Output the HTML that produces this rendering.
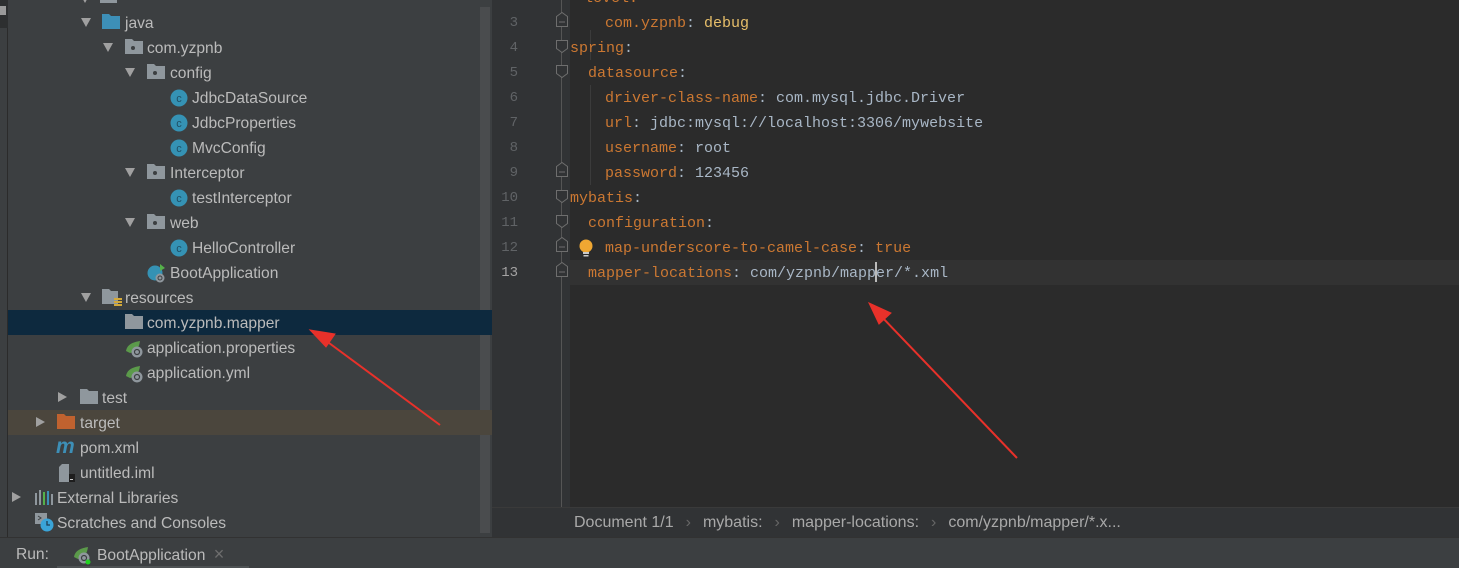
<!DOCTYPE html>
<html><head><meta charset="utf-8">
<style>
*{margin:0;padding:0;box-sizing:border-box}
body{width:1459px;height:568px;overflow:hidden;background:#2b2b2b;position:relative;font-family:"Liberation Sans",sans-serif}
.a{position:absolute}
.t{position:absolute;color:#bbbbbb;font-size:15.6px;line-height:25px;white-space:nowrap;margin-top:2px}
.c{position:absolute;font-family:"Liberation Mono",monospace;font-size:15px;line-height:25px;white-space:pre;color:#a9b7c6;margin-top:2px}
.k{color:#cc7832}
.ln{position:absolute;font-family:"Liberation Mono",monospace;font-size:14px;line-height:25px;color:#606366;width:30px;text-align:right;left:488px;margin-top:2px}
.arr{position:absolute;width:0;height:0;border-left:5px solid transparent;border-right:5px solid transparent;border-top:9px solid #a0a0a0}
.arr.r{border-top:5px solid transparent;border-bottom:5px solid transparent;border-left:9px solid #a0a0a0;border-right:0}
</style></head><body>
<div class="a" style="left:0;top:0;width:8px;height:537px;background:#3c3f41;border-right:1px solid #2b2b2b"></div>
<div class="a" style="left:0;top:0;width:8px;height:28px;background:#2d2f30"></div>
<div class="a" style="left:0;top:6px;width:6px;height:9px;background:#9a9a9a"></div>
<div class="a" style="left:8px;top:0;width:484px;height:537px;background:#3c3f41"></div>
<div class="a" style="left:480px;top:7px;width:10px;height:526px;background:#4a4c4e"></div>
<div class="a" style="left:8px;top:310px;width:484px;height:25px;background:#0d293e"></div>
<div class="a" style="left:8px;top:410px;width:484px;height:25px;background:#4b463d"></div>

<div class="a" style="left:80px;top:-15px;width:60px;height:20px">
 <span class="a" style="left:0;top:9px;border-left:5px solid transparent;border-right:5px solid transparent;border-top:9px solid #a0a0a0"></span>
 <span class="a" style="left:20px;top:10px;width:17px;height:8px;background:#8f979d"></span></div>

<div class="arr" style="left:81px;top:18px"></div>
<svg class="a" style="left:102px;top:14px" width="18" height="15"><path d="M0 0h7l2 2h9v13H0z" fill="#3d8fb7"/></svg>
<div class="t" style="left:125px;top:9px">java</div>

<div class="arr" style="left:103px;top:43px"></div>
<svg class="a" style="left:125px;top:39px" width="18" height="15"><path d="M0 0h7l2 2h9v13H0z" fill="#8f979d"/><circle cx="8" cy="9" r="2" fill="#3c3f41"/></svg>
<div class="t" style="left:147px;top:34px">com.yzpnb</div>

<div class="arr" style="left:125px;top:68px"></div>
<svg class="a" style="left:147px;top:64px" width="18" height="15"><path d="M0 0h7l2 2h9v13H0z" fill="#8f979d"/><circle cx="8" cy="9" r="2" fill="#3c3f41"/></svg>
<div class="t" style="left:170px;top:59px">config</div>

<svg class="a" style="left:170px;top:89px" width="18" height="18"><circle cx="9" cy="9" r="8.5" fill="#3592b4"/><text x="9" y="13" font-size="11" text-anchor="middle" fill="#1f4f63" font-family="Liberation Sans">c</text></svg>
<div class="t" style="left:192px;top:84px">JdbcDataSource</div>
<svg class="a" style="left:170px;top:114px" width="18" height="18"><circle cx="9" cy="9" r="8.5" fill="#3592b4"/><text x="9" y="13" font-size="11" text-anchor="middle" fill="#1f4f63" font-family="Liberation Sans">c</text></svg>
<div class="t" style="left:192px;top:109px">JdbcProperties</div>
<svg class="a" style="left:170px;top:139px" width="18" height="18"><circle cx="9" cy="9" r="8.5" fill="#3592b4"/><text x="9" y="13" font-size="11" text-anchor="middle" fill="#1f4f63" font-family="Liberation Sans">c</text></svg>
<div class="t" style="left:192px;top:134px">MvcConfig</div>

<div class="arr" style="left:125px;top:168px"></div>
<svg class="a" style="left:147px;top:164px" width="18" height="15"><path d="M0 0h7l2 2h9v13H0z" fill="#8f979d"/><circle cx="8" cy="9" r="2" fill="#3c3f41"/></svg>
<div class="t" style="left:170px;top:159px">Interceptor</div>
<svg class="a" style="left:170px;top:189px" width="18" height="18"><circle cx="9" cy="9" r="8.5" fill="#3592b4"/><text x="9" y="13" font-size="11" text-anchor="middle" fill="#1f4f63" font-family="Liberation Sans">c</text></svg>
<div class="t" style="left:192px;top:184px">testInterceptor</div>

<div class="arr" style="left:125px;top:218px"></div>
<svg class="a" style="left:147px;top:214px" width="18" height="15"><path d="M0 0h7l2 2h9v13H0z" fill="#8f979d"/><circle cx="8" cy="9" r="2" fill="#3c3f41"/></svg>
<div class="t" style="left:170px;top:209px">web</div>
<svg class="a" style="left:170px;top:239px" width="18" height="18"><circle cx="9" cy="9" r="8.5" fill="#3592b4"/><text x="9" y="13" font-size="11" text-anchor="middle" fill="#1f4f63" font-family="Liberation Sans">c</text></svg>
<div class="t" style="left:192px;top:234px">HelloController</div>

<svg class="a" style="left:147px;top:263px" width="20" height="20"><circle cx="8" cy="10" r="7.5" fill="#3592b4"/><path d="M13 1l5 4-5 3z" fill="#55b04a"/><circle cx="13" cy="15" r="4.5" fill="#8f979d"/><circle cx="13" cy="15" r="2" fill="none" stroke="#3c3f41" stroke-width="1"/></svg>
<div class="t" style="left:170px;top:259px">BootApplication</div>

<div class="arr" style="left:81px;top:293px"></div>
<svg class="a" style="left:102px;top:289px" width="20" height="18"><path d="M0 0h7l2 2h7v13H0z" fill="#8f979d"/><rect x="12" y="9" width="8" height="2" fill="#d4a93a"/><rect x="12" y="12" width="8" height="2" fill="#d4a93a"/><rect x="12" y="15" width="8" height="2" fill="#d4a93a"/></svg>
<div class="t" style="left:125px;top:284px">resources</div>

<svg class="a" style="left:125px;top:314px" width="18" height="15"><path d="M0 0h7l2 2h9v13H0z" fill="#8f979d"/></svg>
<div class="t" style="left:147px;top:309px">com.yzpnb.mapper</div>

<svg class="a" style="left:125px;top:339px" width="20" height="20"><path d="M1 12C2 5 9 3 15 2c-1 7-4 11-10 12z" fill="#5b9a4a"/><circle cx="12" cy="13" r="5.5" fill="#8f979d"/><circle cx="12" cy="13" r="2.5" fill="none" stroke="#3c3f41" stroke-width="1.2"/></svg>
<div class="t" style="left:147px;top:334px">application.properties</div>
<svg class="a" style="left:125px;top:364px" width="20" height="20"><path d="M1 12C2 5 9 3 15 2c-1 7-4 11-10 12z" fill="#5b9a4a"/><circle cx="12" cy="13" r="5.5" fill="#8f979d"/><circle cx="12" cy="13" r="2.5" fill="none" stroke="#3c3f41" stroke-width="1.2"/></svg>
<div class="t" style="left:147px;top:359px">application.yml</div>

<div class="arr r" style="left:58px;top:392px"></div>
<svg class="a" style="left:80px;top:389px" width="18" height="15"><path d="M0 0h7l2 2h9v13H0z" fill="#8f979d"/></svg>
<div class="t" style="left:102px;top:384px">test</div>

<div class="arr r" style="left:36px;top:417px"></div>
<svg class="a" style="left:57px;top:414px" width="18" height="15"><path d="M0 0h7l2 2h9v13H0z" fill="#c0622f"/></svg>
<div class="t" style="left:80px;top:409px">target</div>

<div class="a" style="left:56px;top:437px;color:#3d8fb7;font:italic bold 21px 'Liberation Sans',sans-serif;line-height:20px">m</div>
<div class="t" style="left:80px;top:434px">pom.xml</div>

<svg class="a" style="left:59px;top:464px" width="16" height="18"><path d="M3 0h7v12H0V3z" fill="#8f979d"/><rect x="10" y="10" width="6" height="8" fill="#1e1e1e"/><rect x="11" y="15" width="3" height="1" fill="#ccc"/><rect x="0" y="12" width="10" height="6" fill="#8f979d"/></svg>
<div class="t" style="left:80px;top:459px">untitled.iml</div>

<div class="arr r" style="left:12px;top:492px"></div>
<svg class="a" style="left:35px;top:489px" width="18" height="16"><rect x="0" y="4" width="2" height="12" fill="#8f979d"/><rect x="4" y="1" width="2" height="15" fill="#8f979d"/><rect x="8" y="3" width="2" height="13" fill="#55b04a"/><rect x="12" y="2" width="2" height="14" fill="#3d8fb7"/><rect x="16" y="5" width="2" height="11" fill="#8f979d"/></svg>
<div class="t" style="left:57px;top:484px">External Libraries</div>

<svg class="a" style="left:34px;top:512px" width="20" height="20"><rect x="1" y="1" width="12" height="11" fill="#8f979d"/><path d="M4 4l3 2-3 2" stroke="#3c3f41" fill="none"/><circle cx="13" cy="13" r="6.5" fill="#3aa4d8"/><path d="M13 9v4h3" stroke="#1f3e55" fill="none" stroke-width="1.3"/></svg>
<div class="t" style="left:57px;top:509px">Scratches and Consoles</div>

<div class="a" style="left:492px;top:0;width:78px;height:507px;background:#313335"></div>
<div class="a" style="left:561px;top:0;width:1px;height:507px;background:#555"></div>
<div class="a" style="left:570px;top:260px;width:889px;height:25px;background:#323232"></div>
<div class="a" style="left:590px;top:30px;width:1px;height:30px;background:#3b3b3b"></div>
<div class="a" style="left:590px;top:85px;width:1px;height:100px;background:#3b3b3b"></div>

<div class="ln" style="top:9px">3</div>
<div class="ln" style="top:34px">4</div>
<div class="ln" style="top:59px">5</div>
<div class="ln" style="top:84px">6</div>
<div class="ln" style="top:109px">7</div>
<div class="ln" style="top:134px">8</div>
<div class="ln" style="top:159px">9</div>
<div class="ln" style="top:184px">10</div>
<div class="ln" style="top:209px">11</div>
<div class="ln" style="top:234px">12</div>
<div class="ln" style="top:259px;color:#a4a3a3">13</div>

<svg class="a" style="left:555px;top:0" width="14" height="290">
 <g fill="#313335" stroke="#6e6e6e" stroke-width="1">
 <path d="M1.5 16.5l5.5-4 5.5 4v10h-11z"/><path d="M1.5 40.5h11v8l-5.5 4-5.5-4z"/><path d="M1.5 65.5h11v8l-5.5 4-5.5-4z"/>
 <path d="M1.5 166.5l5.5-4 5.5 4v10h-11z"/><path d="M1.5 190.5h11v8l-5.5 4-5.5-4z"/><path d="M1.5 215.5h11v8l-5.5 4-5.5-4z"/>
 <path d="M1.5 241.5l5.5-4 5.5 4v10h-11z"/><path d="M1.5 266.5l5.5-4 5.5 4v10h-11z"/>
 </g>
 <g stroke="#6e6e6e"><path d="M4 22h6M4 172h6M4 247h6M4 272h6"/></g>
</svg>

<div class="c k" style="left:584px;top:-16px">level:</div>
<div class="c" style="left:605px;top:9px"><span class="k">com.yzpnb</span>: <span style="color:#e8bf6a">debug</span></div>
<div class="c" style="left:570px;top:34px"><span class="k">spring</span>:</div>
<div class="c" style="left:588px;top:59px"><span class="k">datasource</span>:</div>
<div class="c" style="left:605px;top:84px"><span class="k">driver-class-name</span>: com.mysql.jdbc.Driver</div>
<div class="c" style="left:605px;top:109px"><span class="k">url</span>: jdbc:mysql://localhost:3306/mywebsite</div>
<div class="c" style="left:605px;top:134px"><span class="k">username</span>: root</div>
<div class="c" style="left:605px;top:159px"><span class="k">password</span>: 123456</div>
<div class="c" style="left:570px;top:184px"><span class="k">mybatis</span>:</div>
<div class="c" style="left:588px;top:209px"><span class="k">configuration</span>:</div>
<svg class="a" style="left:578px;top:239px" width="16" height="20"><circle cx="8" cy="7" r="6.5" fill="#f0a732"/><rect x="5" y="13" width="6" height="2" fill="#c9c9c9"/><rect x="5.5" y="16" width="5" height="1.5" fill="#c9c9c9"/></svg>
<div class="c" style="left:605px;top:234px"><span class="k">map-underscore-to-camel-case</span>: <span class="k">true</span></div>
<div class="c" style="left:588px;top:259px"><span class="k">mapper-locations</span>: com/yzpnb/mapper/*.xml</div>
<div class="a" style="left:875px;top:262px;width:2px;height:20px;background:#bbbbbb"></div>

<div class="a" style="left:492px;top:507px;width:967px;height:30px;background:#313335;border-top:1px solid #3a3a3a"></div>
<div class="t" style="left:574px;top:508px;color:#a9a9a9;font-size:16px">Document 1/1<span style="color:#666;margin:0 12px">›</span>mybatis:<span style="color:#666;margin:0 12px">›</span>mapper-locations:<span style="color:#666;margin:0 12px">›</span>com/yzpnb/mapper/*.x...</div>

<div class="a" style="left:0;top:537px;width:1459px;height:31px;background:#3c3f41;border-top:1px solid #323232"></div>
<div class="a" style="left:57px;top:566px;width:192px;height:2px;background:#4e5254"></div>
<div class="t" style="left:16px;top:540px">Run:</div>
<svg class="a" style="left:73px;top:545px" width="20" height="20"><path d="M1 12C2 5 9 3 15 2c-1 7-4 11-10 12z" fill="#5b9a4a"/><circle cx="11" cy="13" r="5.5" fill="#8f979d"/><circle cx="11" cy="13" r="2.5" fill="none" stroke="#3c3f41" stroke-width="1.2"/><circle cx="15" cy="17" r="2.5" fill="#22d322"/></svg>
<div class="t" style="left:97px;top:540px">BootApplication <span style="color:#6e6e6e;margin-left:4px;font-size:18px">×</span></div>

<svg class="a" style="left:0;top:0" width="1459" height="568">
 <g stroke="#e8312a" stroke-width="2" fill="#e8312a">
  <line x1="440" y1="425" x2="325" y2="340"/>
  <path d="M310 330L335 334L326 347z" stroke-width="1"/>
  <line x1="1017" y1="458" x2="880" y2="315"/>
  <path d="M869 303L891 313L879 324z" stroke-width="1"/>
 </g>
</svg>
</body></html>
